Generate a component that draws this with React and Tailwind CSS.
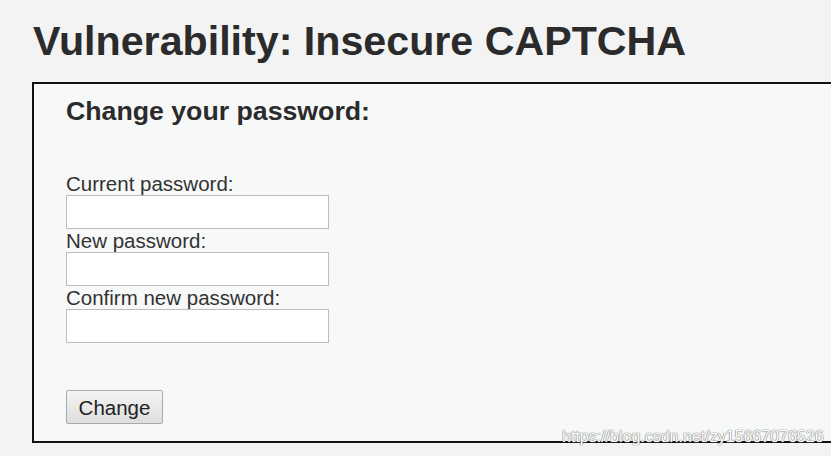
export default function App() {
  const font = { fontFamily: '"Liberation Sans", Arial, sans-serif' };
  return (
    <div className="w-[831px] h-[456px] overflow-hidden bg-[#f3f3f3] relative" style={font}>
      <h1 className="pt-[18px] pl-[33px] text-[41.2px] leading-[47px] font-bold text-[#2b2b2b] whitespace-nowrap">
        Vulnerability: Insecure CAPTCHA
      </h1>
      <div className="mt-[17px] ml-[32px] w-[830px] border-2 border-[#111] bg-[#f7f8f8] pl-[32px] pt-[12px] pb-[17px]">
        <h2 className="text-[26.7px] leading-[30px] font-bold text-[#2b2b2b]">Change your password:</h2>
        <form className="mt-[46px] flex flex-col text-[20.5px] leading-[23px] text-[#333]" onSubmit={(e) => e.preventDefault()}>
          <label className="block">Current password:</label>
          <input type="password" className="block w-[263px] h-[34px] bg-white border border-[#bdbdbd] outline-none" />
          <label className="block">New password:</label>
          <input type="password" className="block w-[263px] h-[34px] bg-white border border-[#bdbdbd] outline-none" />
          <label className="block">Confirm new password:</label>
          <input type="password" className="block w-[263px] h-[34px] bg-white border border-[#bdbdbd] outline-none" />
          <div className="mt-[47px]">
            <button type="submit" className="w-[97px] h-[34px] border border-[#a9a9a9] rounded-[2px] bg-gradient-to-b from-[#f4f4f4] to-[#dedede] text-[20.5px] leading-[23px] text-[#222]">
              Change
            </button>
          </div>
        </form>
      </div>
      <div
        className="absolute left-[562px] top-[428px] text-[16px] leading-[18px] text-white whitespace-nowrap"
        style={{ textShadow: '0 0 1px #808080, 0 0 1px #808080, 0 0 1px #808080' }}
      >
        https://blog.csdn.net/zy15667076526
      </div>
    </div>
  );
}
